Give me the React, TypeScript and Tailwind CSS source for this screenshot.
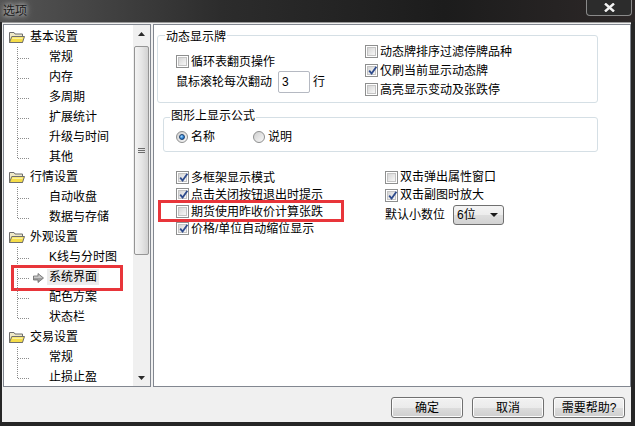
import type { ReactNode } from "react";

const tree = [
  { name: "基本设置", items: ["常规", "内存", "多周期", "扩展统计", "升级与时间", "其他"] },
  { name: "行情设置", items: ["自动收盘", "数据与存储"] },
  { name: "外观设置", items: ["K线与分时图", "系统界面", "配色方案", "状态栏"] },
  { name: "交易设置", items: ["常规", "止损止盈"] },
];

function Folder() {
  return (
    <svg width="16" height="13" viewBox="0 0 16 13" className="shrink-0">
      <path d="M0.5 1.5 H5 L6 3 H13.5 V11.5 H0.5 Z" fill="#efe9c8" stroke="#6f6f6f" />
      <path d="M0.5 11.5 L2.8 5.5 H15.5 L13.5 11.5 Z" fill="#f4dc48" stroke="#6f6f6f" />
      <path d="M3.5 6.5 H14 L13.5 8 H3 Z" fill="#fbf0a0" />
    </svg>
  );
}

function Branch({ last }: { last: boolean }) {
  return (
    <svg width="12" height="20" className="ml-[13px] shrink-0">
      <line x1="0.5" y1="0" x2="0.5" y2={last ? 11 : 20} stroke="#8c8c8c" strokeDasharray="1 1" />
      <line x1="1" y1="11.5" x2="12" y2="11.5" stroke="#8c8c8c" strokeDasharray="1 1" />
    </svg>
  );
}

function Arrow() {
  return (
    <svg width="11" height="10" viewBox="0 0 11 10">
      <path d="M0.5 3 H5 V0.5 L10.5 5 L5 9.5 V7 H0.5 Z" fill="#9c9c9c" stroke="#6a6a6a" strokeWidth="0.8" />
      <path d="M1 3.5 H5.5 V1.5 L9.5 5 H1 Z" fill="#c8c8c8" />
    </svg>
  );
}

function Check({ on }: { on?: boolean }) {
  return (
    <span className="relative flex h-[13px] w-[13px] shrink-0 items-center justify-center border border-[#8e8f8f] bg-white">
      <span className="h-[9px] w-[9px] border border-[#c4c4c4] bg-[linear-gradient(135deg,#d6d6d6,#f7f7f7)]" />
      {on && (
        <svg width="11" height="11" viewBox="0 0 11 11" className="absolute left-[1px] top-0">
          <path d="M2.2 5.6 L4.6 8.6 L9.4 1.8" fill="none" stroke="#2e4b8c" strokeWidth="1.8" />
        </svg>
      )}
    </span>
  );
}

function Radio({ on }: { on?: boolean }) {
  return (
    <span className="flex h-[12px] w-[12px] shrink-0 items-center justify-center rounded-full border border-[#8e8f8f] bg-[linear-gradient(135deg,#cfcfcf,#f8f8f8)]">
      {on && (
        <span className="h-[6px] w-[6px] rounded-full border border-[#1a3f6e] bg-[radial-gradient(circle_at_35%_35%,#a6dcff,#2b7fd4_60%,#114d8f)]" />
      )}
    </span>
  );
}

function CheckRow({ on, label, cls }: { on?: boolean; label: string; cls: string }) {
  return (
    <div className={`flex items-center gap-[2px] ${cls}`}>
      <Check on={on} />
      <span>{label}</span>
    </div>
  );
}

function Btn({ children }: { children: ReactNode }) {
  return (
    <button className="flex h-[21px] w-[72px] items-center justify-center rounded-[3px] border border-[#707070] bg-[linear-gradient(#f2f2f2,#ebebeb_50%,#dddddd_50%,#cfcfcf)] shadow-[inset_0_0_0_1px_#fcfcfc]">
      {children}
    </button>
  );
}

export default function App() {
  return (
    <div className="flex h-[426px] w-[635px] flex-col bg-[#262626] font-['Liberation_Sans','Noto_Sans_CJK_SC',sans-serif] text-[12px] leading-[14px] text-black">
      {/* title bar */}
      <div className="flex h-[22px] items-start justify-between bg-[linear-gradient(90deg,#555555,#2c2c2c_35%,#1c1c1c_70%,#2d2828)]">
        <span className="pl-[3px] pt-[4px] text-[#1a1a1a] [text-shadow:0_0_4px_#cfcfcf,0_0_7px_#bdbdbd]">选项</span>
        <div className="mr-[3px] flex h-[16px] w-[46px] items-center justify-center rounded-b-[4px] border border-t-0 border-[#8a8a8a] bg-[#2c2c2c]">
          <svg width="11" height="9" viewBox="0 0 11 9">
            <path d="M1 0.5 L10 8.5 M10 0.5 L1 8.5" stroke="#f2f2f2" strokeWidth="2.4" />
          </svg>
        </div>
      </div>

      <div className="mb-[4px] ml-[2px] mr-[4px] flex flex-1 flex-col border-t border-[#9a9a9a] bg-[#f0f0f0] pt-[1px]">
        <div className="flex h-[363px]">
          {/* tree */}
          <div className="ml-[1px] flex w-[148px] border border-[#828790] bg-white">
            <div className="flex-1 overflow-hidden pt-[2px]">
              {tree.map((g) => (
                <div key={g.name}>
                  <div className="flex h-[20px] items-center gap-[5px] pl-[5px]">
                    <Folder />
                    <span>{g.name}</span>
                  </div>
                  {g.items.map((it, i) => {
                    const sel = it === "系统界面";
                    return (
                      <div key={it + i} className="relative flex h-[20px] items-center">
                        <Branch last={i === g.items.length - 1} />
                        <span className="flex w-[18px] justify-center pt-[1px]">{sel && <Arrow />}</span>
                        <span className={`px-[2px] leading-[16px] ${sel ? "bg-[#ececec]" : ""}`}>{it}</span>
                        {sel && (
                          <span className="absolute left-[7px] top-[-2px] h-[26px] w-[112px] border-[3px] border-[#e8353a]" />
                        )}
                      </div>
                    );
                  })}
                </div>
              ))}
            </div>
            <div className="flex w-[17px] shrink-0 flex-col bg-[#f0f0f0]">
              <div className="flex h-[17px] items-center justify-center">
                <svg width="7" height="4" viewBox="0 0 7 4">
                  <path d="M0 4 L3.5 0 L7 4 Z" fill="#2a2a2a" />
                </svg>
              </div>
              <div className="mx-[1px] mt-[4px] flex h-[209px] items-center justify-center rounded-[2px] border border-[#959595] bg-[linear-gradient(90deg,#f4f4f4,#e6e6e6_50%,#d2d2d2)]">
                <svg width="7" height="7" viewBox="0 0 7 7">
                  <path d="M0 1.5 H7 M0 3.5 H7 M0 5.5 H7" stroke="#6c6c6c" />
                </svg>
              </div>
              <div className="flex-1" />
              <div className="flex h-[17px] items-center justify-center">
                <svg width="7" height="4" viewBox="0 0 7 4">
                  <path d="M0 0 L3.5 4 L7 0 Z" fill="#2a2a2a" />
                </svg>
              </div>
            </div>
          </div>

          {/* right panel */}
          <div className="ml-[2px] flex-1 border border-[#828790] bg-white">
            <div className="relative ml-[3px] mt-[10px] flex h-[68px] w-[441px] rounded-[3px] border border-[#d5dfe5]">
              <span className="absolute left-[7px] top-[-6px] bg-white px-[1px] leading-[14px]">动态显示牌</span>
              <div className="w-[207px] pl-[18px] pt-[16px]">
                <CheckRow label="循环表翻页操作" cls="h-[19px]" />
                <div className="flex h-[22px] items-center">
                  <span>鼠标滚轮每次翻动</span>
                  <span className="ml-[6px] flex h-[22px] w-[32px] items-center rounded-[2px] border border-[#b5b9c2] pl-[3px]">3</span>
                  <span className="ml-[3px]">行</span>
                </div>
              </div>
              <div className="pt-[6px]">
                <CheckRow label="动态牌排序过滤停牌品种" cls="h-[19px]" />
                <CheckRow on label="仅刷当前显示动态牌" cls="h-[19px]" />
                <CheckRow label="高亮显示变动及张跌停" cls="h-[19px]" />
              </div>
            </div>

            <div className="relative ml-[9px] mt-[14px] flex h-[35px] w-[435px] items-start rounded-[3px] border border-[#d5dfe5] pl-[12px] pt-[10px]">
              <span className="absolute left-[6px] top-[-9px] bg-white px-[1px] leading-[14px]">图形上显示公式</span>
              <div className="flex h-[18px] w-[77px] items-center gap-[3px]">
                <Radio on />
                <span>名称</span>
              </div>
              <div className="flex h-[18px] items-center gap-[3px]">
                <Radio />
                <span>说明</span>
              </div>
            </div>

            <div className="mt-[17px] flex">
              <div className="w-[231px] pl-[22px]">
                <CheckRow on label="多框架显示模式" cls="h-[17px]" />
                <CheckRow on label="点击关闭按钮退出时提示" cls="h-[17px]" />
                <div className="relative">
                  <CheckRow label="期货使用昨收价计算张跌" cls="h-[17px]" />
                  <span className="absolute left-[-18px] top-[-3px] h-[22px] w-[186px] border-[3px] border-[#e8353a]" />
                </div>
                <CheckRow on label="价格/单位自动缩位显示" cls="h-[17px]" />
              </div>
              <div className="-mt-[1px]">
                <CheckRow label="双击弹出属性窗口" cls="h-[18px]" />
                <CheckRow on label="双击副图时放大" cls="h-[18px]" />
                <div className="flex h-[22px] items-center">
                  <span>默认小数位</span>
                  <span className="ml-[8px] flex h-[20px] w-[51px] items-center justify-between rounded-[3px] border border-[#707070] bg-[linear-gradient(#f4f4f4,#ececec_50%,#dedede_50%,#d2d2d2)] pl-[3px] pr-[5px]">
                    <span>6位</span>
                    <svg width="8" height="4" viewBox="0 0 8 4">
                      <path d="M0 0 H8 L4 4 Z" fill="#1a1a1a" />
                    </svg>
                  </span>
                </div>
              </div>
            </div>
          </div>
        </div>

        {/* footer */}
        <div className="flex flex-1 items-start justify-end gap-[9px] pr-[6px] pt-[10px]">
          <Btn>确定</Btn>
          <Btn>取消</Btn>
          <Btn>需要帮助?</Btn>
        </div>
      </div>
    </div>
  );
}
